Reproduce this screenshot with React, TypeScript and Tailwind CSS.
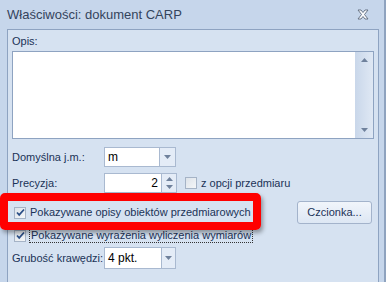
import { ReactNode } from "react";

const font = { fontFamily: '"Liberation Sans", Arial, sans-serif' };

function Arrow({ up = false }: { up?: boolean }) {
  return (
    <svg width="7" height="4" viewBox="0 0 7 4" className={up ? "rotate-180" : ""}>
      <path d="M0 0h7L3.5 4z" fill="#6f819c" />
    </svg>
  );
}

function Combo({ value, divider }: { value: string; divider: number }) {
  return (
    <div className="flex h-[20px] w-[72px] border border-[#a9b9d0] bg-white">
      <div className="flex items-center pl-[3px] text-[12px] text-black" style={{ width: divider }}>
        {value}
      </div>
      <div className="flex flex-1 items-center justify-center border-l border-[#a9b9d0] bg-[#e4ecf7]">
        <Arrow />
      </div>
    </div>
  );
}

function Check({ checked }: { checked?: boolean }) {
  return (
    <div className="flex h-[12px] w-[12px] items-center justify-center border border-[#a5b3c6] bg-gradient-to-br from-[#dde3ea] to-[#f4f6f8]">
      {checked && (
        <svg width="9" height="9" viewBox="0 0 9 9">
          <path d="M1 4.5l2.2 2.4L8 1.5" stroke="#2a4e86" strokeWidth="1.7" fill="none" />
        </svg>
      )}
    </div>
  );
}

function Row({ label, children, className = "" }: { label: string; children: ReactNode; className?: string }) {
  return (
    <div className={`flex items-center ${className}`}>
      <div className="w-[93px] whitespace-nowrap pl-[1px] text-[11px] text-[#1b3257]">{label}</div>
      {children}
    </div>
  );
}

export default function App() {
  return (
    <div
      className="relative h-[282px] w-[386px] overflow-hidden border-r-2 border-r-[#8fa3bf] bg-[#c6d6eb]"
      style={font}
    >
      {/* title bar */}
      <div className="flex h-[29px] items-center justify-between pl-[7px] pr-[15px]">
        <span className="text-[13px] text-[#34445c]">Właściwości: dokument CARP</span>
        <svg width="12" height="11" viewBox="0 0 12 11">
          <path
            d="M1 1h3l2 2.5L8 1h3L7.5 5.5 11 10H8L6 7.5 4 10H1l3.5-4.5z"
            fill="#fafbfd"
            stroke="#5d6a7c"
            strokeWidth="0.9"
            strokeLinejoin="round"
          />
        </svg>
      </div>

      {/* panel */}
      <div className="ml-[7px] mr-[5px] h-[260px] border border-[#8ea3c1] bg-[#d6e2f1] px-[3px]">
        <div className="pl-[1px] pt-[4px] text-[11px] leading-[14px] text-[#1b3257]">Opis:</div>
        <div className="ml-[1px] mt-[3px] flex h-[88px] w-[362px] border border-[#8ea3c1] bg-white">
          <div className="flex-1" />
          <div className="flex w-[18px] flex-col items-center justify-between bg-gradient-to-r from-[#c9d7ea] to-[#dfe8f4] py-[6px]">
            <Arrow up />
            <Arrow />
          </div>
        </div>

        <Row label="Domyślna j.m.:" className="mt-[8px]">
          <Combo value="m" divider={54} />
        </Row>

        <Row label="Precyzja:" className="mt-[6px]">
          <div className="flex h-[20px] w-[73px] border border-[#a9b9d0] bg-white">
            <div className="flex w-[56px] items-center justify-end pr-[3px] text-[12px] text-black">2</div>
            <div className="flex flex-1 flex-col items-center justify-center gap-[4px] border-l border-[#a9b9d0] bg-[#e4ecf7]">
              <Arrow up />
              <Arrow />
            </div>
          </div>
          <div className="ml-[8px]">
            <Check />
          </div>
          <span className="ml-[4px] text-[11px] text-[#1b3257]">z opcji przedmiaru</span>
        </Row>

        <div className="mt-[8px] flex h-[23px] items-center">
          <div className="ml-[3px]">
            <Check checked />
          </div>
          <span className="ml-[4px] text-[11px] text-[#1b3257]">Pokazywane opisy obiektów przedmiarowych</span>
          <button className="ml-auto mr-[3px] h-[23px] w-[75px] rounded-[3px] border border-[#a3b3cb] bg-gradient-to-b from-[#f1f5fb] to-[#dde7f4] text-[11px] text-[#1b3257]">
            Czcionka...
          </button>
        </div>

        <div className="mt-[4px] flex h-[15px] items-center">
          <div className="ml-[3px]">
            <Check checked />
          </div>
          <span className="ml-[3px] border border-dotted border-[#333] px-[1px] text-[11px] leading-[13px] text-[#1b3257]">
            Pokazywane wyrażenia wyliczenia wymiarów
          </span>
        </div>

        <Row label="Grubość krawędzi:" className="mt-[4px]">
          <div className="flex h-[22px] w-[72px] border border-[#a9b9d0] bg-white">
            <div className="flex w-[56px] items-center pl-[3px] text-[12px] text-black">4 pkt.</div>
            <div className="flex flex-1 items-center justify-center border-l border-[#a9b9d0] bg-[#e4ecf7]">
              <Arrow />
            </div>
          </div>
        </Row>
      </div>

      {/* red highlight annotation */}
      <div className="absolute left-0 top-[193px] h-[37px] w-[261px] rounded-[5px] border-[8px] border-[#ff0000] shadow-[2px_3px_4px_rgba(0,0,0,0.35)]" />
    </div>
  );
}
